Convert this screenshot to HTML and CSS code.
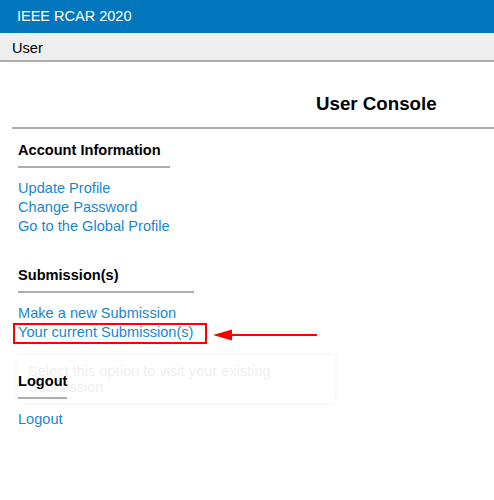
FILE: index.html
```html
<!DOCTYPE html>
<html>
<head>
<meta charset="utf-8">
<title>User Console</title>
<link rel="stylesheet" href="styles.css">
</head>
<body>
<header class="topbar">IEEE RCAR 2020</header>
<nav class="subbar">User</nav>
<main class="page">
  <h3 class="title">User Console</h3>
  <div class="rule"></div>
  <section class="group first">
    <h4 class="group-head">Account Information</h4>
    <div class="head-rule w-acct"></div>
    <ul class="links">
      <li><a href="#">Update Profile</a></li>
      <li><a href="#">Change Password</a></li>
      <li><a href="#">Go to the Global Profile</a></li>
    </ul>
  </section>
  <section class="group">
    <h4 class="group-head">Submission(s)</h4>
    <div class="head-rule w-sub"></div>
    <ul class="links">
      <li><a href="#">Make a new Submission</a></li>
      <li class="current"><a href="#">Your current Submission(s)</a>
        <div class="tooltip">Select this option to visit your existing Submission</div>
      </li>
    </ul>
  </section>
  <section class="group">
    <h4 class="group-head">Logout</h4>
    <div class="head-rule w-out"></div>
    <ul class="links">
      <li><a href="#">Logout</a></li>
    </ul>
  </section>
</main>
<svg class="annot" width="494" height="500" viewBox="0 0 494 500">
  <rect x="14" y="324" width="192" height="19" fill="none" stroke="#ff0000" stroke-width="2"/>
  <line x1="230" y1="335" x2="317" y2="335" stroke="#ff0000" stroke-width="2"/>
  <polygon points="213,335 232,329.5 232,340.5" fill="#ff0000"/>
</svg>
</body>
</html>
```
FILE: styles.css
```css
html {
  margin: 0;
  padding: 0;
  background: #ffffff;
}
body {
  margin: 0;
  padding: 0;
  font-family: "Liberation Sans", Arial, sans-serif;
  font-size: 14.6px;
  color: #000;
  position: relative;
  width: 494px;
  height: 500px;
  overflow: hidden;
}
.topbar {
  height: 33px;
  line-height: 33px;
  background: #0277bd;
  color: #ffffff;
  padding-left: 17px;
  font-size: 14.5px;
}
.subbar {
  height: 27px;
  line-height: 30px;
  background: #eeeeee;
  border-bottom: 2px solid #adadad;
  padding-left: 12px;
  font-size: 14.6px;
}
.page {
  padding-left: 12px;
}
.title {
  margin: 31px 0 12px 304px;
  font-size: 18.72px;
  line-height: 22px;
  font-weight: bold;
}
.rule {
  height: 0;
  border-top: 2px solid #adadad;
}
.group {
  padding-left: 6px;
  margin-top: 30px;
}
.group.first {
  margin-top: 12px;
}
.group-head {
  margin: 0;
  font-size: 14.6px;
  line-height: 18px;
  font-weight: bold;
  position: relative;
}
.head-rule {
  margin-top: 7px;
  border-top: 2px solid #adadad;
  position: relative;
}
.w-acct { width: 152px; }
.w-sub { width: 176px; }
.w-out { width: 49px; }
.links {
  list-style: none;
  margin: 11px 0 0;
  padding: 0;
}
.links li {
  line-height: 19px;
}
.links a {
  color: #1a87cc;
  text-decoration: none;
}
.current {
  position: relative;
}
.tooltip {
  position: absolute;
  left: 0;
  top: 32px;
  width: 297px;
  padding: 8px 10px 8px 10px;
  line-height: 16px;
  color: #f0f0f0;
  background: #ffffff;
  border-radius: 4px;
  box-shadow: 0 0 6px rgba(0, 0, 0, 0.06);
  z-index: -1;
}
.annot {
  position: absolute;
  left: 0;
  top: 0;
  pointer-events: none;
}
```
